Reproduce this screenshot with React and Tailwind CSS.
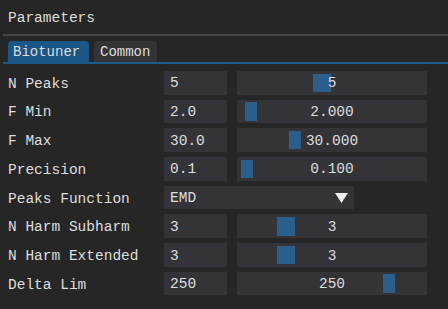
import React from "react";

const rows = [
  { label: "N Peaks", input: "5", slider: "5", grabLeft: 76, grabW: 18 },
  { label: "F Min", input: "2.0", slider: "2.000", grabLeft: 8, grabW: 12 },
  { label: "F Max", input: "30.0", slider: "30.000", grabLeft: 52, grabW: 12 },
  { label: "Precision", input: "0.1", slider: "0.100", grabLeft: 4, grabW: 12 },
  { label: "Peaks Function", combo: "EMD" },
  { label: "N Harm Subharm", input: "3", slider: "3", grabLeft: 40, grabW: 18 },
  { label: "N Harm Extended", input: "3", slider: "3", grabLeft: 40, grabW: 18 },
  { label: "Delta Lim", input: "250", slider: "250", grabLeft: 146, grabW: 12 },
];

export default function App() {
  return (
    <div
      className="w-[448px] h-[309px] bg-[#262626] text-[#dedede] overflow-hidden flex flex-col"
      style={{ fontFamily: '"Liberation Mono", "DejaVu Sans Mono", monospace' }}
    >
      <div className="text-[14.5px] h-[34px] pl-[8px] pt-[9px] leading-[18px]">Parameters</div>
      <div className="ml-[3px] h-[2px] bg-[#444444]" />
      <div className="mt-[5px] ml-[8px] flex gap-[5px] h-[21px] text-[14px] leading-[22px]">
        <div className="w-[81px] bg-[#1b5686] rounded-t-[4px] pl-[5px]">Biotuner</div>
        <div className="w-[63px] bg-[#333338] rounded-t-[4px] pl-[6px]">Common</div>
      </div>
      <div className="ml-[3px] h-[2px] bg-[#1d5a8b]" />
      <div className="mt-[7px] flex flex-col gap-[5.1px] text-[14.5px]">
        {rows.map((r) => (
          <div key={r.label} className="flex items-center h-[23.6px]">
            <div className="w-[164px] pl-[8px] pt-[3px] leading-[23px]">{r.label}</div>
            {r.combo ? (
              <div className="w-[190px] h-full bg-[#333338] flex items-center justify-between pl-[6px] pr-[6px]">
                <span className="pt-[3px]">{r.combo}</span>
                <svg width="13" height="10" viewBox="0 0 13 10">
                  <polygon points="0,0 13,0 6.5,10" fill="#f0f0f0" />
                </svg>
              </div>
            ) : (
              <>
                <div className="w-[63px] h-full bg-[#333338] pl-[6px] pt-[3px] flex items-center">{r.input}</div>
                <div className="ml-[10px] w-[190px] h-full bg-[#333338] relative flex items-center justify-center">
                  <div
                    className="absolute top-[2.5px] bottom-[2.5px] bg-[#2a5e8b]"
                    style={{ left: r.grabLeft, width: r.grabW }}
                  />
                  <span className="relative pt-[3px]">{r.slider}</span>
                </div>
              </>
            )}
          </div>
        ))}
      </div>
    </div>
  );
}
